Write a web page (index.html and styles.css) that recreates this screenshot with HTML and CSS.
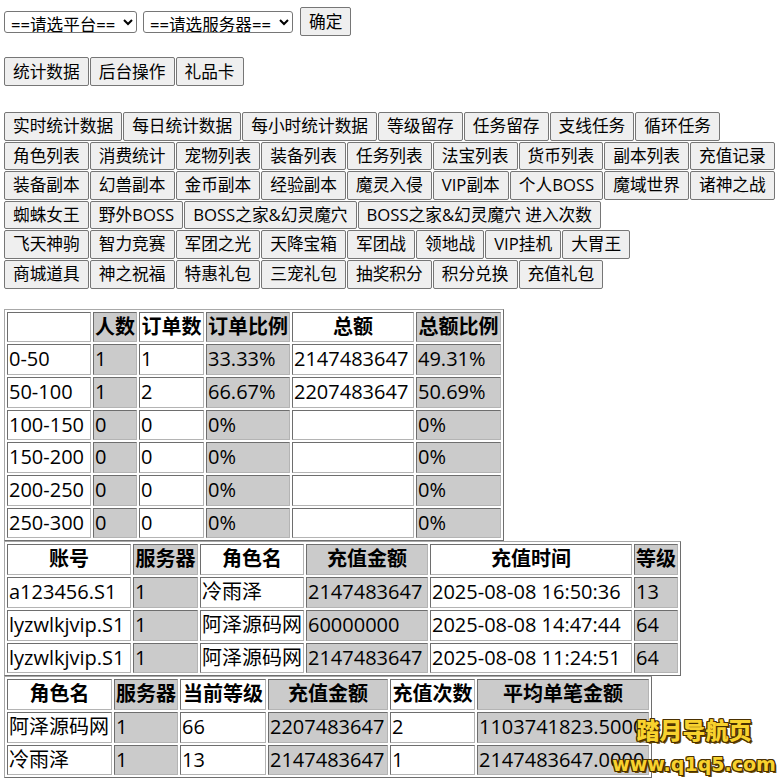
FILE: index.html
```html
<!DOCTYPE html>
<html lang="zh-CN">
<head>
    <meta charset="UTF-8">
    <meta name="viewport" content="width=device-width, initial-scale=1.0">
    <title>统计数据</title>
    <link rel="stylesheet" href="styles.css">
</head>
<body>

<div class="toolbar">
    <select class="sel sel-plat"><option>==请选平台==</option></select>
    <select class="sel sel-server"><option>==请选服务器==</option></select>
    <button class="btn">确定</button>
</div>

<div class="nav-row">
    <button class="btn">统计数据</button><button class="btn">后台操作</button><button class="btn">礼品卡</button>
</div>

<div class="menu">
    <div class="menu-row">
        <button class="btn">实时统计数据</button><button class="btn">每日统计数据</button><button class="btn">每小时统计数据</button><button class="btn">等级留存</button><button class="btn">任务留存</button><button class="btn">支线任务</button><button class="btn">循环任务</button>
    </div>
    <div class="menu-row">
        <button class="btn">角色列表</button><button class="btn">消费统计</button><button class="btn">宠物列表</button><button class="btn">装备列表</button><button class="btn">任务列表</button><button class="btn">法宝列表</button><button class="btn">货币列表</button><button class="btn">副本列表</button><button class="btn">充值记录</button>
    </div>
    <div class="menu-row">
        <button class="btn">装备副本</button><button class="btn">幻兽副本</button><button class="btn">金币副本</button><button class="btn">经验副本</button><button class="btn">魔灵入侵</button><button class="btn">VIP副本</button><button class="btn">个人BOSS</button><button class="btn">魔域世界</button><button class="btn">诸神之战</button>
    </div>
    <div class="menu-row">
        <button class="btn">蜘蛛女王</button><button class="btn">野外BOSS</button><button class="btn">BOSS之家&amp;幻灵魔穴</button><button class="btn">BOSS之家&amp;幻灵魔穴 进入次数</button>
    </div>
    <div class="menu-row">
        <button class="btn">飞天神驹</button><button class="btn">智力竞赛</button><button class="btn">军团之光</button><button class="btn">天降宝箱</button><button class="btn">军团战</button><button class="btn">领地战</button><button class="btn">VIP挂机</button><button class="btn">大胃王</button>
    </div>
    <div class="menu-row">
        <button class="btn">商城道具</button><button class="btn">神之祝福</button><button class="btn">特惠礼包</button><button class="btn">三宠礼包</button><button class="btn">抽奖积分</button><button class="btn">积分兑换</button><button class="btn">充值礼包</button>
    </div>
</div>

<!-- 充值区间统计 -->
<table class="data range-table">
    <tr><th></th><th>人数</th><th>订单数</th><th>订单比例</th><th>总额</th><th>总额比例</th></tr>
    <tr><td>0-50</td><td>1</td><td>1</td><td>33.33%</td><td>2147483647</td><td>49.31%</td></tr>
    <tr><td>50-100</td><td>1</td><td>2</td><td>66.67%</td><td>2207483647</td><td>50.69%</td></tr>
    <tr><td>100-150</td><td>0</td><td>0</td><td>0%</td><td></td><td>0%</td></tr>
    <tr><td>150-200</td><td>0</td><td>0</td><td>0%</td><td></td><td>0%</td></tr>
    <tr><td>200-250</td><td>0</td><td>0</td><td>0%</td><td></td><td>0%</td></tr>
    <tr><td>250-300</td><td>0</td><td>0</td><td>0%</td><td></td><td>0%</td></tr>
</table>

<!-- 充值记录 -->
<table class="data order-table">
    <tr><th>账号</th><th>服务器</th><th>角色名</th><th>充值金额</th><th>充值时间</th><th>等级</th></tr>
    <tr><td>a123456.S1</td><td>1</td><td>冷雨泽</td><td>2147483647</td><td>2025-08-08 16:50:36</td><td>13</td></tr>
    <tr><td>lyzwlkjvip.S1</td><td>1</td><td>阿泽源码网</td><td>60000000</td><td>2025-08-08 14:47:44</td><td>64</td></tr>
    <tr><td>lyzwlkjvip.S1</td><td>1</td><td>阿泽源码网</td><td>2147483647</td><td>2025-08-08 11:24:51</td><td>64</td></tr>
</table>

<!-- 角色充值汇总 -->
<table class="data role-table">
    <tr><th>角色名</th><th>服务器</th><th>当前等级</th><th>充值金额</th><th>充值次数</th><th>平均单笔金额</th></tr>
    <tr><td>阿泽源码网</td><td>1</td><td>66</td><td>2207483647</td><td>2</td><td>1103741823.5000</td></tr>
    <tr><td>冷雨泽</td><td>1</td><td>13</td><td>2147483647</td><td>1</td><td>2147483647.0000</td></tr>
</table>

<div class="watermark">
    <div class="wm-title">踏月导航页</div>
    <div class="wm-url">www.q1q5.com</div>
</div>

</body>
</html>
```

FILE: styles.css
```css
body {
    margin: 0;
    padding: 7px 4px 0;
    font-family: "Open Sans", "Noto Sans CJK SC", sans-serif;
    color: #000;
    background: #fff;
    position: relative;
}
.toolbar {
    display: flex;
    align-items: center;
    height: 29px;
    margin-bottom: 21px;
}
.sel {
    font-family: inherit;
    font-size: 16.6px;
    height: 22px;
    padding: 0 0 0 2px;
    border: 1px solid #767676;
    border-radius: 3px;
    background-color: #fff;
    color: #000;
    margin-right: 6px;
}
.sel-plat {
    width: 133px;
}
.sel-server {
    width: 150px;
}
.btn {
    font-family: inherit;
    font-size: 16.7px;
    line-height: 23px;
    padding: 2px 8px;
    border: 1px solid #767676;
    border-radius: 2px;
    background-color: #efefef;
    color: #000;
    margin: 0;
    white-space: nowrap;
    cursor: pointer;
}
.toolbar .btn {
    margin-left: 1px;
}
.nav-row {
    display: flex;
    gap: 1px;
    margin-bottom: 26px;
}
.menu {
    display: flex;
    flex-direction: column;
    gap: 1px;
    margin-bottom: 20px;
}
.menu-row {
    display: flex;
    gap: 1px;
}
.menu-row .btn {
    line-height: 22.6px;
}

/* 数据表格 */
.data {
    border: 1px solid;
    border-color: #a8a8a8 #6e6e6e #6e6e6e #a8a8a8;
    border-spacing: 2px;
    font-size: 20px;
}
.data th, .data td {
    box-sizing: border-box;
    padding: 1px;
    line-height: 26.7px;
    border: 1px solid;
    border-color: #6e6e6e #b4b4b4 #b4b4b4 #6e6e6e;
    white-space: nowrap;
    text-align: left;
}
.data th {
    text-align: center;
    font-weight: bold;
}
.data th:nth-child(even), .data td:nth-child(even) {
    background-color: #cbcbcb;
}

.range-table th:nth-child(1) { width: 84px; }
.range-table th:nth-child(2) { width: 44px; }
.range-table th:nth-child(3) { width: 65px; }
.range-table th:nth-child(4) { width: 84px; }
.range-table th:nth-child(5) { width: 122px; }
.range-table th:nth-child(6) { width: 85px; }

.order-table th:nth-child(1) { width: 124px; }
.order-table th:nth-child(2) { width: 65px; }
.order-table th:nth-child(3) { width: 104px; }
.order-table th:nth-child(4) { width: 122px; }
.order-table th:nth-child(5) { width: 202px; }
.order-table th:nth-child(6) { width: 44px; }

.role-table th:nth-child(1) { width: 105px; }
.role-table th:nth-child(2) { width: 64px; }
.role-table th:nth-child(3) { width: 86px; }
.role-table th:nth-child(4) { width: 120px; }
.role-table th:nth-child(5) { width: 85px; }
.role-table th:nth-child(6) { width: 172px; }

/* 水印 */
.watermark {
    position: absolute;
    left: 606px;
    top: 716px;
    width: 176px;
    text-align: center;
    color: #f8d22e;
    font-weight: 900;
    text-shadow: 1px 0 #4a3000, -1px 0 #4a3000, 0 1px #4a3000, 0 -1px #4a3000,
                 1px 1px #4a3000, -1px -1px #4a3000, 1px -1px #4a3000, -1px 1px #4a3000,
                 2px 2px #6b4a00;
}
.wm-title {
    font-family: "Noto Sans CJK SC", sans-serif;
    font-size: 23px;
    line-height: 26px;
}
.wm-url {
    font-family: "DejaVu Sans", sans-serif;
    font-weight: bold;
    font-size: 19px;
    line-height: 22px;
    margin-top: 11px;
}
```
